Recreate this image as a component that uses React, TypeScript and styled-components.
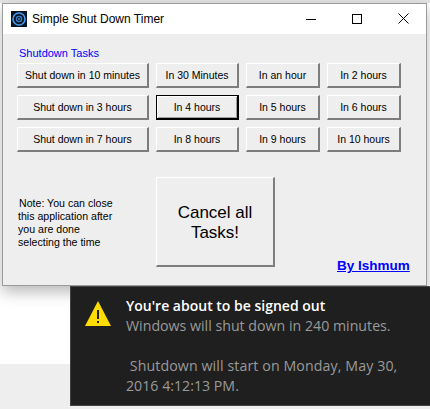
import React from "react";
import styled, { createGlobalStyle } from "styled-components";

const GlobalStyle = createGlobalStyle`
  html, body {
    margin: 0;
    padding: 0;
    overflow: hidden;
  }
  body {
    font-family: "Liberation Sans", Arial, sans-serif;
    background: #fff;
  }
`;

const rows = [
  ["Shut down in 10 minutes", "In 30 Minutes", "In an hour", "In 2 hours"],
  ["Shut down in 3 hours", "In 4 hours", "In 5 hours", "In 6 hours"],
  ["Shut down in 7 hours", "In 8 hours", "In 9 hours", "In 10 hours"],
];

const AppIcon = () => (
  <svg width="16" height="16" viewBox="0 0 16 16">
    <rect width="16" height="16" fill="#0b1420" />
    <circle cx="8" cy="8" r="6" fill="none" stroke="#3f9bf0" strokeWidth="1.6" />
    <circle cx="8" cy="8" r="2.6" fill="none" stroke="#2f7fd6" strokeWidth="1.3" />
    <circle cx="8" cy="8" r="0.8" fill="#9fd0ff" />
  </svg>
);

const MinIcon = () => (
  <svg width="10" height="10" viewBox="0 0 10 10">
    <path d="M0 5.5H10" stroke="#000" strokeWidth="1" />
  </svg>
);

const MaxIcon = () => (
  <svg width="10" height="10" viewBox="0 0 10 10">
    <rect x="0.5" y="0.5" width="9" height="9" fill="none" stroke="#000" strokeWidth="1" />
  </svg>
);

const CloseIcon = () => (
  <svg width="11" height="11" viewBox="0 0 11 11">
    <path d="M0.5 0.5L10.5 10.5M10.5 0.5L0.5 10.5" stroke="#000" strokeWidth="1" />
  </svg>
);

const WarningIcon = () => (
  <svg width="26" height="26" viewBox="0 0 26 26">
    <path d="M13 0L26 25H0Z" fill="#ffdc00" />
    <rect x="12" y="9" width="2" height="9" fill="#222" />
    <rect x="12" y="20" width="2" height="2" fill="#222" />
  </svg>
);

export default function App() {
  return (
    <Page>
      <GlobalStyle />
      <TopStrip />
      <Window>
        <TitleBar>
          <AppIcon />
          <Title>Simple Shut Down Timer</Title>
          <WinButtons>
            <WinButton>
              <MinIcon />
            </WinButton>
            <WinButton>
              <MaxIcon />
            </WinButton>
            <WinButton>
              <CloseIcon />
            </WinButton>
          </WinButtons>
        </TitleBar>
        <Client>
          <Heading>Shutdown Tasks</Heading>
          <ButtonGrid>
            {rows.flat().map((label) => (
              <TaskButton key={label} $active={label === "In 4 hours"}>
                {label}
              </TaskButton>
            ))}
          </ButtonGrid>
          <Bottom>
            <Note>
              Note: You can close
              <br />
              this application after
              <br />
              you are done
              <br />
              selecting the time
            </Note>
            <CancelButton>
              Cancel all
              <br />
              Tasks!
            </CancelButton>
            <Author href="#">By Ishmum</Author>
          </Bottom>
        </Client>
      </Window>
      <Toast>
        <ToastIcon>
          <WarningIcon />
        </ToastIcon>
        <ToastText>
          <ToastTitle>You're about to be signed out</ToastTitle>
          <ToastBody>
            Windows will shut down in 240 minutes.
            <br />
            <br />
            <WideLine>{"\u00a0Shutdown will start on Monday, May 30,"}</WideLine>
            <br />
            2016 4:12:13 PM.
          </ToastBody>
        </ToastText>
      </Toast>
    </Page>
  );
}

const Page = styled.div`
  width: 430px;
  height: 409px;
  overflow: hidden;
  background: linear-gradient(to bottom, #fff 0, #fff 364px, #eeeeee 364px);
`;
const TopStrip = styled.div`
  height: 3px;
  background: #e4e4e4;
`;
const Window = styled.div`
  width: 423px;
  height: 281px;
  margin-left: 2px;
  border: 1px solid #9b9b9b;
  display: flex;
  flex-direction: column;
  box-shadow: 0 6px 14px rgba(0, 0, 0, 0.28);
`;
const TitleBar = styled.div`
  height: 30px;
  flex-shrink: 0;
  background: #fff;
  display: flex;
  align-items: center;
  padding-left: 8px;
  padding-bottom: 1px;
  box-sizing: border-box;
`;
const Title = styled.div`
  font-size: 12px;
  color: #000;
  margin-left: 5px;
`;
const WinButtons = styled.div`
  margin-left: auto;
  display: flex;
`;
const WinButton = styled.div`
  width: 46px;
  height: 30px;
  display: flex;
  align-items: center;
  justify-content: center;
`;
const Client = styled.div`
  flex: 1;
  background: #eeeeee;
  padding: 13px 0 0 14px;
  display: flex;
  flex-direction: column;
`;
const Heading = styled.div`
  font-size: 11px;
  line-height: 13px;
  color: #0000ff;
  margin-left: 2px;
`;
const ButtonGrid = styled.div`
  display: grid;
  grid-template-columns: 132px 83px 74px 74px;
  grid-auto-rows: 25px;
  gap: 7px;
  margin-top: 3px;
`;
const TaskButton = styled.div<{ $active?: boolean }>`
  box-sizing: border-box;
  display: flex;
  align-items: center;
  justify-content: center;
  font-size: 10.5px;
  color: #000;
  background: #eeeeee;
  border-style: solid;
  border-width: 1px 2px 2px 1px;
  border-color: #fff #7d7d7d #7d7d7d #fff;
  ${({ $active }) => $active && `
    border-color: #000;
    box-shadow: inset 1px 1px 0 #fff, inset -1px -1px 0 #a0a0a0;
  `}
`;
const Bottom = styled.div`
  display: flex;
  margin-top: 25px;
  height: 99px;
`;
const Note = styled.div`
  width: 139px;
  font-size: 10.6px;
  line-height: 13px;
  color: #000;
  padding: 20px 0 0 1px;
  box-sizing: border-box;
  text-indent: 1px;
`;
const CancelButton = styled.div`
  box-sizing: border-box;
  width: 119px;
  height: 90px;
  padding-top: 2px;
  display: flex;
  align-items: center;
  justify-content: center;
  text-align: center;
  font-size: 17px;
  line-height: 20px;
  color: #000;
  background: #eeeeee;
  border-style: solid;
  border-width: 1px 2px 2px 1px;
  border-color: #fff #7d7d7d #7d7d7d #fff;
`;
const Author = styled.a`
  align-self: flex-end;
  margin-left: 62px;
  margin-bottom: 3px;
  font-size: 13.5px;
  font-weight: bold;
  line-height: 15px;
  color: #0000ff;
  text-decoration: underline;
`;
const Toast = styled.div`
  box-sizing: border-box;
  width: 360px;
  height: 120px;
  margin: 0 0 0 70px;
  background: #1f1f1f;
  border: 1px solid #444;
  border-right: none;
  display: flex;
`;
const ToastIcon = styled.div`
  padding: 14px 0 0 14px;
  width: 55px;
  box-sizing: border-box;
  line-height: 0;
`;
const ToastText = styled.div`
  padding-top: 8px;
  font-family: "Open Sans", "Noto Sans", sans-serif;
`;
const ToastTitle = styled.div`
  font-size: 14px;
  line-height: 21px;
  font-weight: 600;
  color: #fff;
`;
const ToastBody = styled.div`
  font-size: 14.2px;
  line-height: 20px;
  color: #9a9a9a;
`;
const WideLine = styled.span`
  letter-spacing: 0.1px;
`;
